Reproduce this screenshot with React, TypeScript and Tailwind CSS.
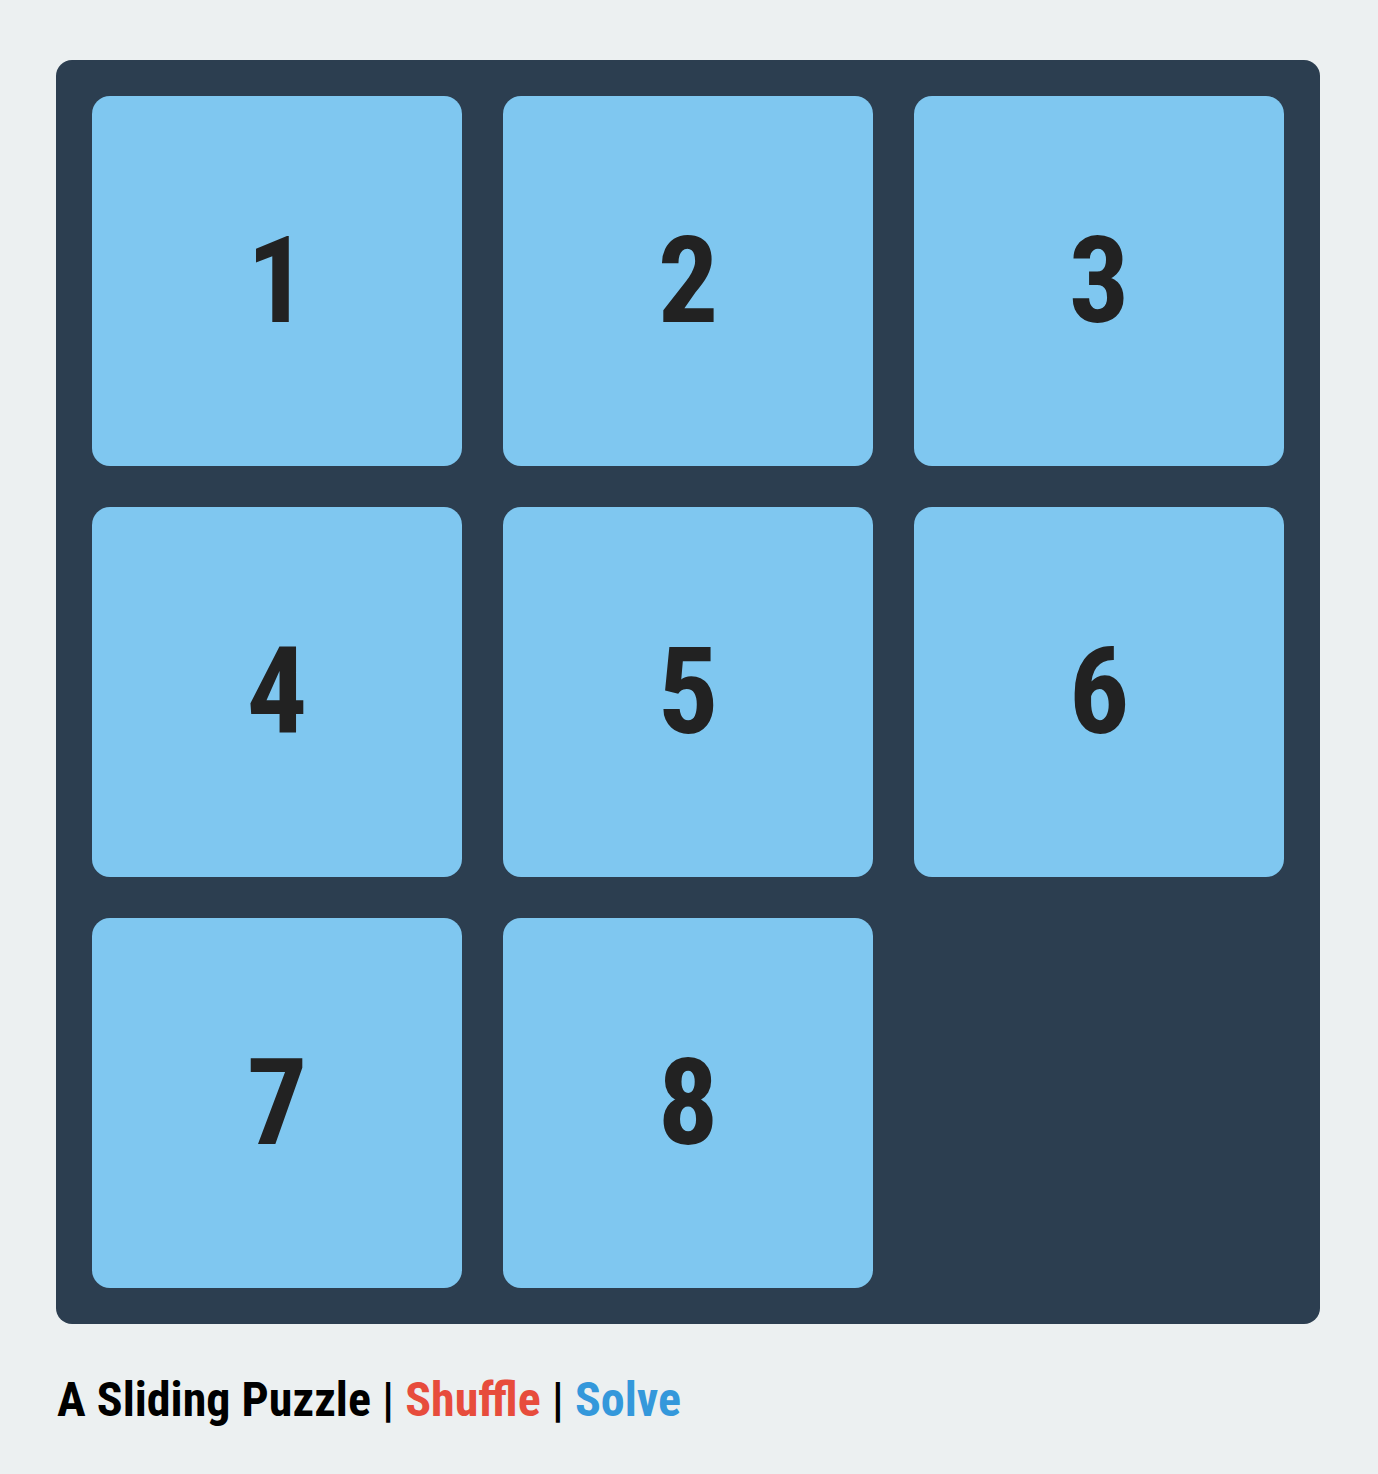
import React from 'react';

const tiles: (number | null)[] = [1, 2, 3, 4, 5, 6, 7, 8, null];

const App: React.FC = () => {
  return (
    <div className="min-h-[1474px] bg-[#ecf0f1] px-[56px] pt-[60px] font-['Roboto_Condensed','Liberation_Sans_Narrow',Roboto,sans-serif] font-stretch-condensed">
      {/* Board */}
      <div className="grid w-[1264px] grid-cols-3 gap-[41px] rounded-[16px] bg-[#2c3e50] p-[36px]">
        {tiles.map((n, i) =>
          n === null ? (
            <div key={i} className="h-[370px]" />
          ) : (
            <div
              key={i}
              className="flex h-[370px] items-center justify-center rounded-[18px] bg-[#7fc7f0] text-[120px] font-bold leading-none text-[#222222]"
            >
              {n}
            </div>
          )
        )}
      </div>

      {/* Footer */}
      <div className="mt-[52px] pl-[1px] text-[48px] font-bold leading-none text-black">
        A Sliding Puzzle | <span className="text-[#e74c3c]">Shuffle</span> |{' '}
        <span className="text-[#3498db]">Solve</span>
      </div>
    </div>
  );
};

export default App;
